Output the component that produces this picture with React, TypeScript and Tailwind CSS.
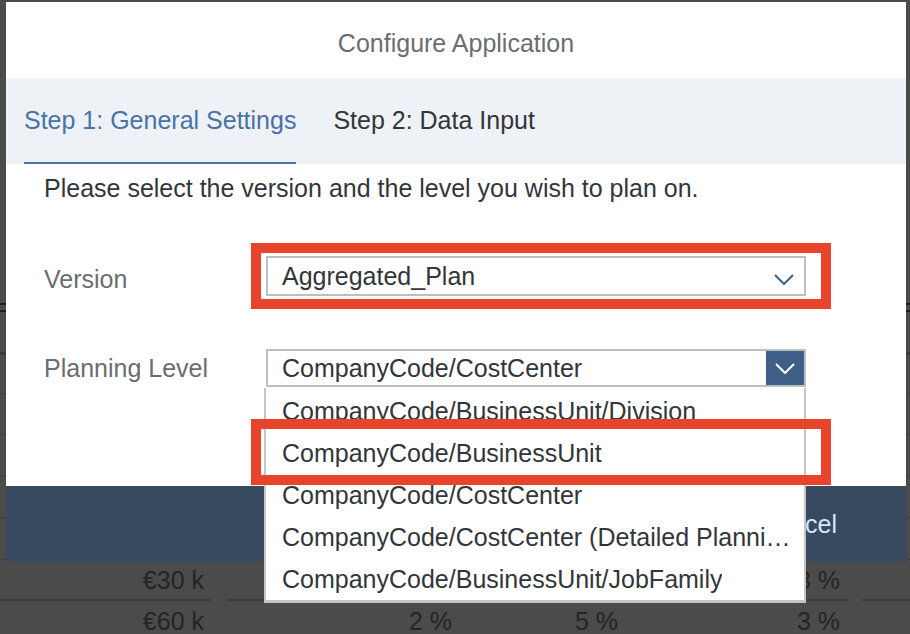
import React from 'react';

const levels = [
  'CompanyCode/BusinessUnit/Division',
  'CompanyCode/BusinessUnit',
  'CompanyCode/CostCenter',
  'CompanyCode/CostCenter (Detailed Planning)',
  'CompanyCode/BusinessUnit/JobFamily',
];

const Chevron: React.FC<{ className?: string }> = ({ className }) => (
  <svg width="20" height="11" viewBox="0 0 20 11" className={className}>
    <polyline points="1,1 10,10 19,1" fill="none" stroke="currentColor" strokeWidth="2" />
  </svg>
);

// page behind the dialog: the planning table
const Backdrop: React.FC = () => {
  const cells = (vals: string[]) => (
    <div className="flex h-[41px] gap-[14px]">
      <div className="flex w-[212px] items-center justify-end border-b-2 border-[#3c3c3c] pr-[8px]">{vals[0]}</div>
      <div className="flex w-[234px] items-center justify-end border-b-2 border-[#3c3c3c] pr-[8px]">{vals[1]}</div>
      <div className="flex w-[152px] items-center justify-end border-b-2 border-[#3c3c3c] pr-[8px]">{vals[2]}</div>
      <div className="flex w-[208px] items-center justify-end border-b-2 border-[#3c3c3c] pr-[8px]">{vals[3]}</div>
      <div className="flex-1 border-b-2 border-[#3c3c3c]" />
    </div>
  );
  return (
    <div className="flex flex-col text-[#242424]">
      <div className="h-[303px]" />
      <div className="h-[2px] bg-[#1e1e1e]" />
      <div className="h-[5px]" />
      <div className="h-[2px] bg-[#1e1e1e]" />
      <div className="h-[40px]" />
      <div className="h-[3px] bg-[#3a3a3a]" />
      <div className="h-[39px] border-b border-[#3e3e3e]" />
      <div className="h-[41px] border-b border-[#3e3e3e]" />
      <div className="h-[42px] border-b border-[#3e3e3e]" />
      <div className="h-[41px] border-b border-[#3e3e3e]" />
      <div className="h-[42px] border-b border-[#3e3e3e]" />
      {cells(['€30 k', '', '', '3 %'])}
      {cells(['€60 k', '2 %', '5 %', '3 %'])}
    </div>
  );
};

const Dialog: React.FC = () => (
  <div className="absolute left-[6px] top-[2px] flex w-[900px] flex-col bg-white">
    <div className="flex h-[76px] items-center justify-center pt-[6px] text-[#6a6d70]">Configure Application</div>
    <div className="flex h-[86px] gap-[37px] bg-[#eef2f7] pl-[18px]">
      <div className="flex items-center border-b-2 border-[#4a72a6] text-[#4a72a6]">
        Step 1: General Settings
      </div>
      <div className="flex items-center pb-[2px] text-[#32363a]">Step 2: Data Input</div>
    </div>
    <div className="flex h-[322px] flex-col pl-[38px] pt-[10px] text-[#32363a]">
      <p className="leading-[28px]">Please select the version and the level you wish to plan on.</p>
      <div className="mt-[54px] flex items-center">
        <div className="mt-[6px] w-[222px] text-[#6a6d70]">Version</div>
        <div className="flex h-[40px] w-[540px] items-center justify-between border-2 border-[#bfbfbf] pl-[14px] pr-[10px]">
          <span>Aggregated_Plan</span>
          <Chevron className="mt-[6px] text-[#3f5f87]" />
        </div>
      </div>
      <div className="mt-[53px] flex items-center">
        <div className="w-[222px] text-[#6a6d70]">Planning Level</div>
        <div className="flex h-[38px] w-[540px] items-center justify-between border-2 border-[#bfbfbf] pl-[14px]">
          <span>CompanyCode/CostCenter</span>
          <div className="flex h-full w-[38px] items-center justify-center bg-[#3f5f86] text-white">
            <Chevron />
          </div>
        </div>
      </div>
    </div>
    <div className="flex h-[76px] items-center justify-end bg-[#384a5f] pr-[69px] text-[#d1e8ff]">Cancel</div>
  </div>
);

const LevelMenu: React.FC = () => (
  <div className="absolute left-[264px] top-[388px] w-[542px] border-x-2 border-b-[3px] border-[#c4c4c4] bg-white pt-[2px] text-[#32363a]">
    {levels.map((l) => (
      <div key={l} className="flex h-[42px] items-center pl-[16px] pr-[12px]">
        <span className="truncate">{l}</span>
      </div>
    ))}
  </div>
);

const Highlight: React.FC<{ top: string }> = ({ top }) => (
  <div className={`absolute left-[251px] h-[66px] w-[580px] border-[10px] border-[#e8432b] ${top}`} />
);

export default function App() {
  return (
    <div className="relative h-[634px] w-full overflow-hidden bg-[#4b4b4b] font-['Liberation_Sans',Arial,sans-serif] text-[25px] leading-[28px]">
      <Backdrop />
      <Dialog />
      <LevelMenu />
      <Highlight top="top-[243px]" />
      <Highlight top="top-[419px]" />
    </div>
  );
}
